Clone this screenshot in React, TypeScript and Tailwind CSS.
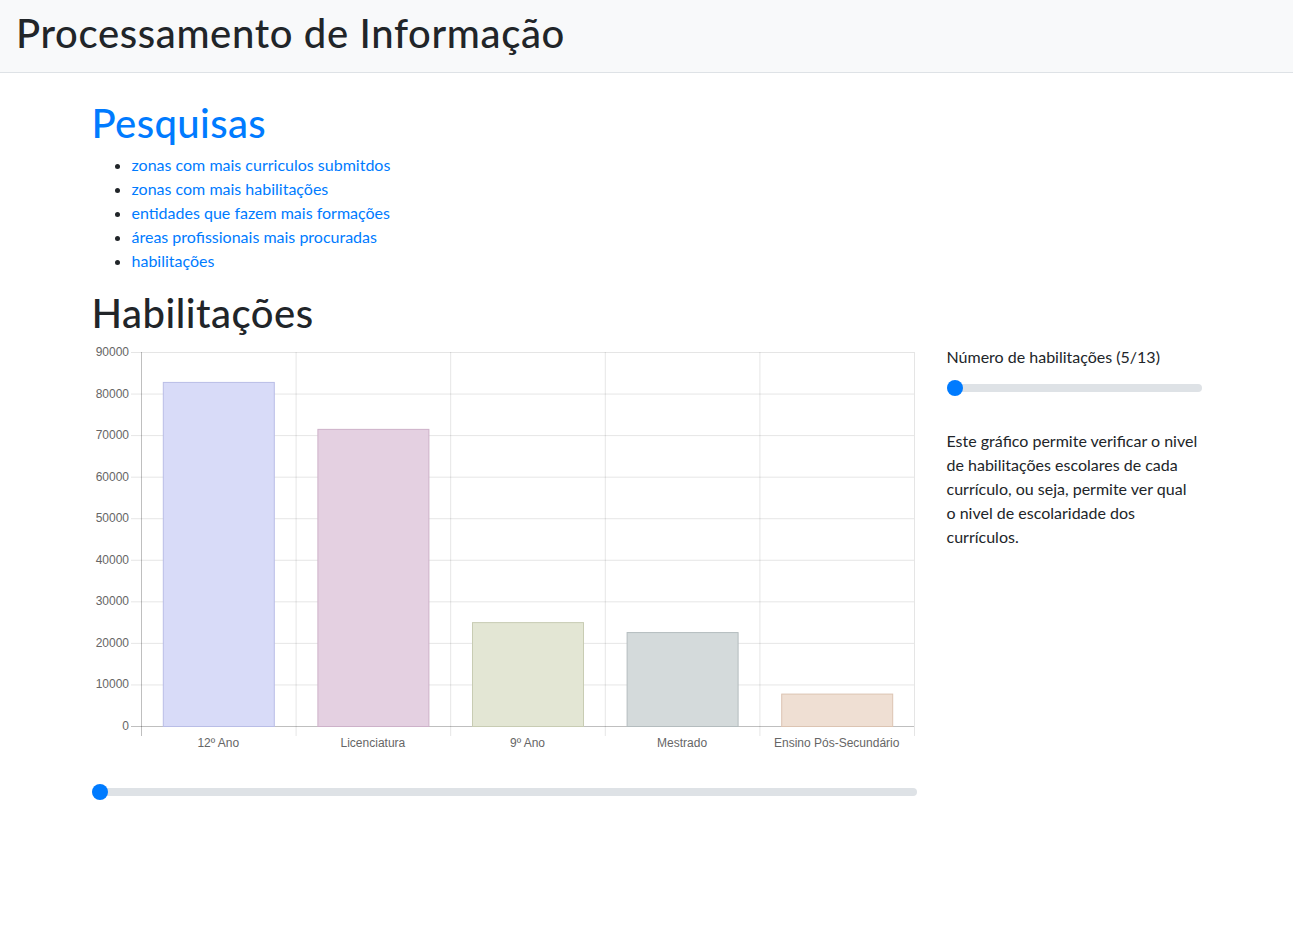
import React from 'react';

const font = { fontFamily: 'Lato, "Noto Sans", sans-serif' };

const bars = [
  { label: '12º Ano', value: 82800, fill: '#d8dbf8', stroke: '#b9bde6' },
  { label: 'Licenciatura', value: 71500, fill: '#e4d0e1', stroke: '#cdb1c9' },
  { label: '9º Ano', value: 25000, fill: '#e3e6d4', stroke: '#c8ccb3' },
  { label: 'Mestrado', value: 22600, fill: '#d4dadb', stroke: '#b4bcbe' },
  { label: 'Ensino Pós-Secundário', value: 7800, fill: '#efdfd3', stroke: '#dcc4b2' },
];

function Chart() {
  const left = 49;
  const right = 822;
  const top = 7;
  const bottom = 381;
  const max = 90000;
  const cw = (right - left) / bars.length;
  const bw = 111;
  const y = (v: number) => bottom - (v / max) * (bottom - top);
  const ticks = [0, 10000, 20000, 30000, 40000, 50000, 60000, 70000, 80000, 90000];

  return (
    <svg width="825" height="410" className="block" style={{ fontFamily: 'Arial, "Liberation Sans", sans-serif' }}>
      {ticks.map((t) => (
        <g key={t}>
          <line x1={left - 10} x2={right} y1={y(t) + 0.5} y2={y(t) + 0.5} stroke={t === 0 ? 'rgba(0,0,0,0.25)' : 'rgba(0,0,0,0.1)'} />
          <text x={left - 12} y={y(t) + 4} textAnchor="end" fontSize="12" fill="#666">
            {t}
          </text>
        </g>
      ))}
      {Array.from({ length: bars.length + 1 }).map((_, i) => (
        <line
          key={i}
          x1={left + i * cw + 0.5}
          x2={left + i * cw + 0.5}
          y1={top}
          y2={bottom + 10}
          stroke={i === 0 ? 'rgba(0,0,0,0.25)' : 'rgba(0,0,0,0.1)'}
        />
      ))}
      {bars.map((b, i) => {
        const x = left + i * cw + (cw - bw) / 2;
        return (
          <g key={b.label}>
            <rect x={x + 0.5} y={y(b.value) + 0.5} width={bw} height={bottom - y(b.value)} fill={b.fill} stroke={b.stroke} />
            <text x={left + i * cw + cw / 2} y={402} textAnchor="middle" fontSize="12" fill="#666">
              {b.label}
            </text>
          </g>
        );
      })}
    </svg>
  );
}

function Slider() {
  return (
    <div className="relative h-[22px] flex items-center">
      <div className="w-full h-2 rounded-full bg-[#dee2e6]" />
      <div className="absolute left-0 top-[3px] w-4 h-4 rounded-full bg-[#007bff]" />
    </div>
  );
}

export default function App() {
  return (
    <div className="min-h-screen bg-white text-[#212529]" style={font}>
      <nav className="bg-[#f8f9fa] border-b border-[#dee2e6] px-4 py-2 h-[73px]">
        <h1 className="text-[40px] leading-[48px] font-medium tracking-[0.65px] mt-[1px]">Processamento de Informação</h1>
      </nav>

      <div className="max-w-[1140px] mx-auto px-[15px] pt-[26px]">
        <h1 className="text-[40px] leading-[48px] font-medium tracking-[0.4px] text-[#007bff] mb-[6px]">Pesquisas</h1>
        <ul className="list-disc pl-10 mb-4 text-base leading-6">
          <li><a href="#" className="text-[#007bff]">zonas com mais curriculos submitdos</a></li>
          <li><a href="#" className="text-[#007bff]">zonas com mais habilitações</a></li>
          <li><a href="#" className="text-[#007bff]">entidades que fazem mais formações</a></li>
          <li><a href="#" className="text-[#007bff]">áreas profissionais mais procuradas</a></li>
          <li><a href="#" className="text-[#007bff]">habilitações</a></li>
        </ul>

        <h1 className="text-[40px] leading-[48px] font-medium tracking-[0.5px] mb-2">Habilitações</h1>

        <div className="flex -mx-[15px]">
          <div className="w-[855px] px-[15px]">
            <Chart />
            <div className="mt-[26px]">
              <Slider />
            </div>
          </div>
          <div className="w-[285px] px-[15px] text-base leading-6">
            <label className="block mb-2">Número de habilitações (5/13)</label>
            <Slider />
            <p className="mt-[30px] max-w-[251px]">
              Este gráfico permite verificar o nivel de habilitações escolares de cada currículo, ou seja, permite ver qual o nivel de escolaridade dos currículos.
            </p>
          </div>
        </div>
      </div>
    </div>
  );
}
